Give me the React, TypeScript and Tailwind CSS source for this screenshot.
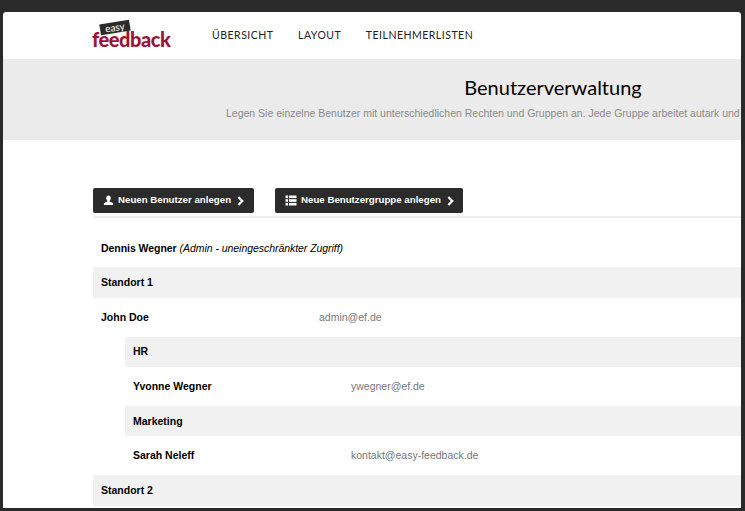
import React from 'react';

const sans = 'font-["Liberation_Sans",Arial,sans-serif]';

interface Row {
  name: string;
  email?: string;
  gray?: boolean;
  indent?: boolean;
}

const rows: Row[] = [
  { name: 'Standort 1', gray: true },
  { name: 'John Doe', email: 'admin@ef.de' },
  { name: 'HR', gray: true, indent: true },
  { name: 'Yvonne Wegner', email: 'ywegner@ef.de', indent: true },
  { name: 'Marketing', gray: true, indent: true },
  { name: 'Sarah Neleff', email: 'kontakt@easy-feedback.de', indent: true },
  { name: 'Standort 2', gray: true },
];

function UserIcon() {
  return (
    <svg width="11" height="11" viewBox="0 0 12 12" fill="currentColor">
      <path d="M6 0.5C4.4 0.5 3.5 1.7 3.5 3.2C3.5 4.4 4 5.5 4.8 6.2L4.8 7C3.2 7.6 1 8.2 1 9.4L1 11L11 11L11 9.4C11 8.2 8.8 7.6 7.2 7L7.2 6.2C8 5.5 8.5 4.4 8.5 3.2C8.5 1.7 7.6 0.5 6 0.5Z" />
    </svg>
  );
}

function ListIcon() {
  return (
    <svg width="12" height="11" viewBox="0 0 12 11" fill="currentColor">
      <rect x="0.5" y="0.5" width="2.6" height="2.6" />
      <rect x="4" y="0.5" width="7.5" height="2.6" />
      <rect x="0.5" y="4.2" width="2.6" height="2.6" />
      <rect x="4" y="4.2" width="7.5" height="2.6" />
      <rect x="0.5" y="7.9" width="2.6" height="2.6" />
      <rect x="4" y="7.9" width="7.5" height="2.6" />
    </svg>
  );
}

function Chevron() {
  return (
    <svg width="7" height="10" viewBox="0 0 8 11" fill="none" stroke="currentColor" strokeWidth="2.6">
      <path d="M1.5 1L6 5.5L1.5 10" />
    </svg>
  );
}

function DarkButton({ icon, label, width }: { icon: React.ReactNode; label: string; width: string }) {
  return (
    <button className={`flex h-[25px] items-center gap-[4px] rounded-[2px] bg-[#2b2b2b] pl-[10px] text-[9.7px] font-bold whitespace-nowrap text-white ${width}`}>
      {icon}
      <span className="mr-[2px]">{label}</span>
      <Chevron />
    </button>
  );
}

export default function App() {
  return (
    <div className={`h-[511px] w-[745px] overflow-hidden bg-[#2a2a2a] pt-3 pr-1 pb-[3px] pl-[3px] ${sans}`}>
      <div className="h-full overflow-hidden rounded-t-[3px] bg-white">
        <div className="w-[1100px]">
          <header className="flex h-[47px] items-center">
            <div className="relative ml-[89px] h-[34px] w-[80px]">
              <span className="absolute top-[3px] left-[8px] -rotate-[9deg] bg-[#2b2b2b] px-[5px] font-['Lato',sans-serif] text-[10px] leading-[11px] text-white">easy</span>
              <span className="absolute top-[7px] left-0 font-['Lato',sans-serif] text-[20px] leading-[26px] font-black tracking-[-0.45px] text-[#a01438]">feedback</span>
            </div>
            <nav className="ml-[40px] flex gap-[24.5px] font-['Lato',sans-serif] text-[10.5px] tracking-[0.5px] text-[#222]">
              <span>ÜBERSICHT</span>
              <span>LAYOUT</span>
              <span>TEILNEHMERLISTEN</span>
            </nav>
          </header>

          <section className="flex h-[81px] flex-col items-center bg-[#ebebeb] pt-[13px]">
            <h1 className="font-['Lato',sans-serif] text-[20px] leading-[30px] text-black">Benutzerverwaltung</h1>
            <p className="mt-[3px] ml-[223px] self-start text-[10.5px] leading-[16px] whitespace-nowrap text-[#8a8a8a]">
              Legen Sie einzelne Benutzer mit unterschiedlichen Rechten und Gruppen an. Jede Gruppe arbeitet autark und
            </p>
          </section>

          <div className="mt-[48px] ml-[90px]">
            <div className="flex gap-[21px] border-b-2 border-[#eeeeee] pb-[3px]">
              <DarkButton icon={<UserIcon />} label="Neuen Benutzer anlegen" width="w-[161px]" />
              <DarkButton icon={<ListIcon />} label="Neue Benutzergruppe anlegen" width="w-[188px]" />
            </div>
            <div className="flex h-[49.33px] items-center pt-[13px] pl-2 text-[10.5px] tracking-[-0.05px] text-black">
              <strong>Dennis Wegner</strong>
              <em className="ml-[3px]">(Admin - uneingeschränkter Zugriff)</em>
            </div>
            {rows.map((row) => (
              <div key={row.name} className={`${row.indent ? 'ml-8' : ''} ${row.gray ? 'h-[30.4px] bg-[#f1f1f1]' : 'h-[38.93px]'} flex items-center pt-[0.6px] pl-2 text-[10.5px]`}>
                <strong className="w-[218px] text-black">{row.name}</strong>
                {row.email && <span className="text-[#777777]">{row.email}</span>}
              </div>
            ))}
          </div>
        </div>
      </div>
    </div>
  );
}
